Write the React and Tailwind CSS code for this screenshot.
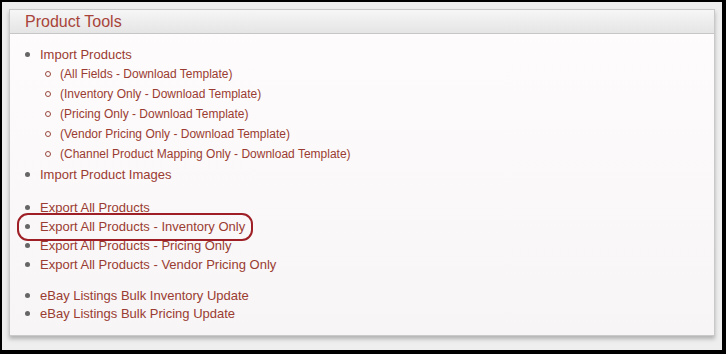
import React from "react";

const font = { fontFamily: '"Liberation Sans", Arial, sans-serif' };

function Row({ children, level = 1, h = "h-[20px]" }) {
  return (
    <div className={`flex items-center ${h} ${level === 1 ? "pl-[15px]" : "pl-[35px]"}`}>
      <span className={`w-[15px] flex items-center`}>
        {level === 1 ? (
          <span className="block w-[5px] h-[5px] rounded-full bg-[#666]" />
        ) : (
          <span className="block w-[6px] h-[6px] rounded-full border border-[#9a4a40]" />
        )}
      </span>
      <a className={`${level === 1 ? "text-[13px]" : "text-[12px]"} text-[#9a3c32] leading-none whitespace-nowrap`}>{children}</a>
    </div>
  );
}

export default function App() {
  return (
    <div style={font} className="w-[726px] h-[354px] bg-black pl-[2px] pt-[2px] pr-[4px] pb-[4px]">
      <div className="w-full h-full bg-[#eeeeee] pl-[7px] pt-[7px] relative">
        <div className="w-[706px] h-[327px] border border-[#c9c9c9] bg-gradient-to-b from-[#fefcfc] to-[#f7f5f5] shadow-[0_3px_4px_rgba(0,0,0,0.25)]">
          <div className="h-[24px] bg-gradient-to-b from-[#f6f6f6] to-[#e5e5e5] border-b border-[#c6c6c6] flex items-center pl-[15px]">
            <span className="text-[16px] text-[#a8443a] leading-none">Product Tools</span>
          </div>
          <div className="pt-[10px]">
            <Row>Import Products</Row>
            <Row level={2}>(All Fields - Download Template)</Row>
            <Row level={2}>(Inventory Only - Download Template)</Row>
            <Row level={2}>(Pricing Only - Download Template)</Row>
            <Row level={2}>(Vendor Pricing Only - Download Template)</Row>
            <Row level={2}>(Channel Product Mapping Only - Download Template)</Row>
            <Row>Import Product Images</Row>
            <div className="h-[14px]" />
            <Row h="h-[19px]">Export All Products</Row>
            <Row h="h-[19px]">Export All Products - Inventory Only</Row>
            <Row h="h-[19px]">Export All Products - Pricing Only</Row>
            <Row h="h-[19px]">Export All Products - Vendor Pricing Only</Row>
            <div className="h-[12px]" />
            <Row h="h-[18px]">eBay Listings Bulk Inventory Update</Row>
            <Row h="h-[18px]">eBay Listings Bulk Pricing Update</Row>
          </div>
        </div>
        <div className="absolute left-[15px] top-[211px] w-[236px] h-[28px] border-2 border-[#9e1f26] rounded-[11px]" />
      </div>
    </div>
  );
}
